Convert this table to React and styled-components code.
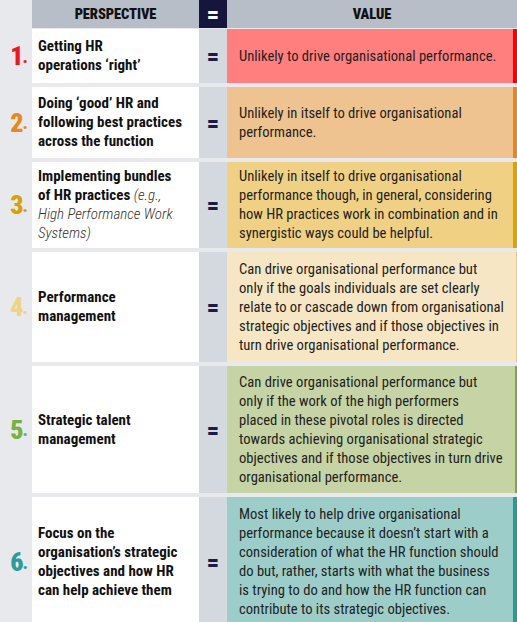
import React from 'react';
import styled, { createGlobalStyle } from 'styled-components';

const GlobalStyle = createGlobalStyle`
  body {
    margin: 0;
    background: #e8e9ec;
    font-family: "Roboto Condensed", Roboto, "Liberation Sans", sans-serif;
  }
`;

const Page = styled.div`
  width: 517px;
  height: 622px;
  overflow: hidden;
  background: #e8e9ec;
  display: flex;
  flex-direction: column;
`;

const HeaderRow = styled.div`
  display: grid;
  grid-template-columns: 32px 167px 28px 1fr;
  height: 28px;
  flex-shrink: 0;
  margin-bottom: 1px;
`;

const HeadCell = styled.div`
  grid-column: ${(p) => p.$col};
  background: #b8bec8;
  display: flex;
  align-items: center;
  justify-content: center;
  font-weight: 900;
  font-size: 14.5px;
  letter-spacing: -0.1px;
  color: #111;
`;

const EqHead = styled.div`
  grid-column: 3;
  background: #16163c;
  display: flex;
  align-items: center;
  justify-content: center;
  color: #fff;
  font-weight: 900;
  font-size: 24px;
  line-height: 1;
`;

const Rows = styled.div`
  display: flex;
  flex-direction: column;
  gap: 4px;
  flex-shrink: 0;
`;

const Row = styled.div`
  display: grid;
  grid-template-columns: 32px 167px 28px 1fr 4px;
  height: ${(p) => p.$h}px;
  flex-shrink: 0;
`;

const Num = styled.div`
  display: flex;
  align-items: center;
  justify-content: flex-end;
  padding-right: 4px;
  color: ${(p) => p.$color};
  font-weight: 900;
  font-size: 26px;
  letter-spacing: -1px;
`;

const Dot = styled.span`
  font-size: 18px;
  letter-spacing: 0;
`;

const Perspective = styled.div`
  background: #fff;
  padding: 0 6px;
  display: flex;
  flex-direction: column;
  justify-content: center;
  font-weight: 700;
  font-size: 15px;
  line-height: 19px;
  color: #111;
  white-space: nowrap;
`;

const Aside = styled.span`
  font-weight: 300;
  font-style: italic;
  color: #333;
`;

const EqCell = styled.div`
  background: #d4d8df;
  display: flex;
  align-items: center;
  justify-content: center;
  color: #1b1b48;
  font-weight: 900;
  font-size: 24px;
  line-height: 1;
`;

const Value = styled.div`
  background: ${(p) => p.$bg};
  padding: 0 12px;
  display: flex;
  flex-direction: column;
  justify-content: center;
  font-size: 14.6px;
  line-height: 19px;
  color: #222;
  white-space: nowrap;
`;

const Edge = styled.div`
  background: ${(p) => p.$color};
`;

const rows = [
  {
    n: '1',
    numColor: '#f5141e',
    bg: '#ff7f7f',
    edge: '#ff0000',
    h: 54,
    persp: [['Getting HR'], ['operations ‘right’']],
    value: ['Unlikely to drive organisational performance.'],
  },
  {
    n: '2',
    numColor: '#e58a1f',
    bg: '#efc38f',
    edge: '#e0892a',
    h: 71,
    persp: [['Doing ‘good’ HR and'], ['following best practices'], ['across the function']],
    value: ['Unlikely in itself to drive organisational', 'performance.'],
  },
  {
    n: '3',
    numColor: '#d6a300',
    bg: '#f0d184',
    edge: '#d9a400',
    h: 86,
    persp: [
      ['Implementing bundles'],
      ['of HR practices ', '(e.g.,'],
      [null, 'High Performance Work'],
      [null, 'Systems)'],
    ],
    value: [
      'Unlikely in itself to drive organisational',
      'performance though, in general, considering',
      'how HR practices work in combination and in',
      'synergistic ways could be helpful.',
    ],
  },
  {
    n: '4',
    numColor: '#edd486',
    bg: '#f6e6c3',
    edge: '#edcb70',
    h: 110,
    persp: [['Performance'], ['management']],
    value: [
      'Can drive organisational performance but',
      'only if the goals individuals are set clearly',
      'relate to or cascade down from organisational',
      'strategic objectives and if those objectives in',
      'turn drive organisational performance.',
    ],
  },
  {
    n: '5',
    numColor: '#77b043',
    bg: '#c6d3a4',
    edge: '#7aa64e',
    h: 127,
    persp: [['Strategic talent'], ['management']],
    value: [
      'Can drive organisational performance but',
      'only if the work of the high performers',
      'placed in these pivotal roles is directed',
      'towards achieving organisational strategic',
      'objectives and if those objectives in turn drive',
      'organisational performance.',
    ],
  },
  {
    n: '6',
    numColor: '#2a9d9a',
    bg: '#9dcdc9',
    edge: '#2b9a92',
    h: 130,
    persp: [
      ['Focus on the'],
      ['organisation’s strategic'],
      ['objectives and how HR'],
      ['can help achieve them'],
    ],
    value: [
      'Most likely to help drive organisational',
      'performance because it doesn’t start with a',
      'consideration of what the HR function should',
      'do but, rather, starts with what the business',
      'is trying to do and how the HR function can',
      'contribute to its strategic objectives.',
    ],
  },
];

export default function App() {
  return (
    <Page>
      <GlobalStyle />
      <HeaderRow>
        <HeadCell $col="2">PERSPECTIVE</HeadCell>
        <EqHead>=</EqHead>
        <HeadCell $col="4">VALUE</HeadCell>
      </HeaderRow>
      <Rows>
        {rows.map((row) => (
          <Row key={row.n} $h={row.h}>
            <Num $color={row.numColor}>
              {row.n}
              <Dot>.</Dot>
            </Num>
            <Perspective>
              {row.persp.map(([bold, italic], i) => (
                <div key={i}>
                  {bold}
                  {italic && <Aside>{italic}</Aside>}
                </div>
              ))}
            </Perspective>
            <EqCell>=</EqCell>
            <Value $bg={row.bg}>
              {row.value.map((line) => (
                <div key={line}>{line}</div>
              ))}
            </Value>
            <Edge $color={row.edge} />
          </Row>
        ))}
      </Rows>
    </Page>
  );
}
